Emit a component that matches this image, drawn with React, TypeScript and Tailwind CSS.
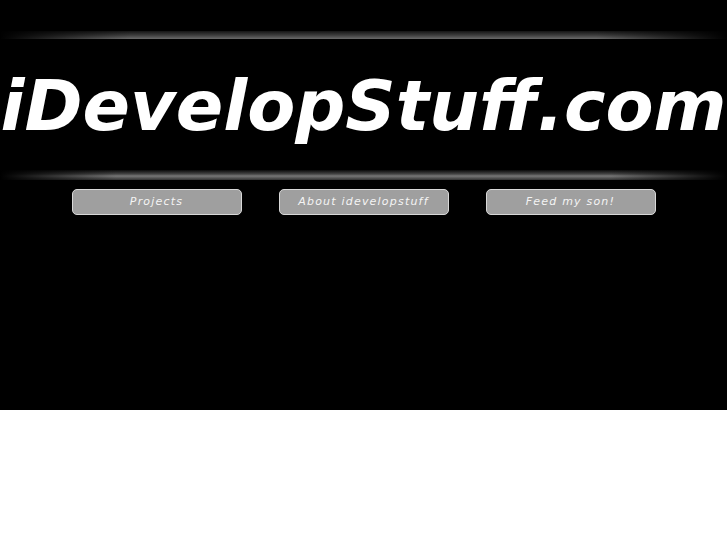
const NAV = ["Projects", "About idevelopstuff", "Feed my son!"];

// glowing rule above and below the site title, fading out at both ends
function Rule({ className }: { className: string }) {
  return <div className={`w-full ${className}`} />;
}

export default function App() {
  return (
    <div className="min-h-[545px] bg-white">
      <header className="h-[410px] bg-black pt-[31px]">
        <Rule className="h-[8px] bg-[linear-gradient(to_right,#000,rgba(0,0,0,0)_18%,rgba(0,0,0,0)_82%,#000),linear-gradient(to_bottom,#141414,#3a3a3a_50%,#6a6a6a)]" />
        <h1 className="mt-[19px] h-[112px] text-center font-['DejaVu_Sans',sans-serif] text-[70px] font-bold italic leading-[96px] text-white whitespace-nowrap">
          iDevelopStuff.com
        </h1>
        <Rule className="h-[10px] bg-[linear-gradient(to_right,#000,rgba(0,0,0,0)_16%,rgba(0,0,0,0)_84%,#000),linear-gradient(to_bottom,#0a0a0a,#444_40%,#777_60%,#333)]" />
        <nav className="mt-[9px] flex justify-center gap-[37px]">
          {NAV.map((label) => (
            <a
              key={label}
              href="#"
              className="flex h-[26px] w-[170px] items-center justify-center rounded-[5px] border border-[#d8d8d8] bg-[#9f9f9f] font-['DejaVu_Sans',sans-serif] text-[11px] italic tracking-[1.2px] text-[#f4f4f4]"
            >
              {label}
            </a>
          ))}
        </nav>
      </header>
    </div>
  );
}
